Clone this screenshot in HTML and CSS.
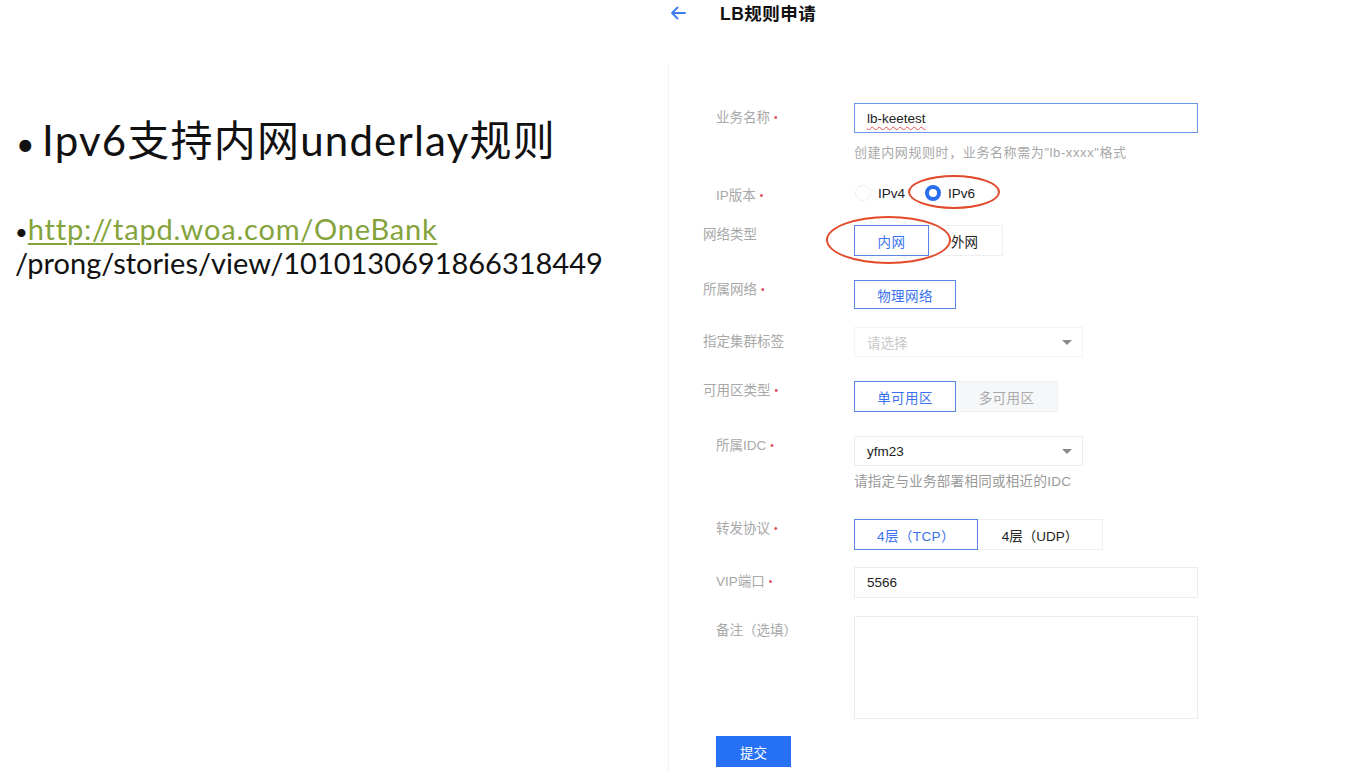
FILE: index.html
```html
<!DOCTYPE html>
<html lang="zh">
<head>
<meta charset="utf-8">
<title>LB规则申请</title>
<link rel="stylesheet" href="styles.css">
</head>
<body>
<div class="page">
  <section class="slide">
    <h1 class="slide-title"><span class="bullet">•</span>Ipv6支持内网underlay规则</h1>
    <div class="slide-link">
      <div class="link-line"><span class="dot">•</span><a href="#">http://tapd.woa.com/OneBank</a></div>
      <div class="link-line">/prong/stories/view/1010130691866318449</div>
    </div>
  </section>

  <section class="panel">
    <header class="panel-head">
      <svg class="back" width="18" height="16" viewBox="0 0 18 16"><path d="M16 8H3M8.5 2.5L3 8l5.5 5.5" fill="none" stroke="#3b7cf0" stroke-width="1.8" stroke-linecap="round" stroke-linejoin="round"/></svg>
      <h2 class="panel-title">LB规则申请</h2>
    </header>

    <div class="panel-body">
      <div class="row row-name">
        <div class="label">业务名称<i class="req">•</i></div>
        <div class="control">
          <div class="input input--active"><span class="typed">lb-keetest</span></div>
          <div class="hint">创建内网规则时，业务名称需为"lb-xxxx"格式</div>
        </div>
      </div>

      <div class="row row-ip">
        <div class="label">IP版本<i class="req">•</i></div>
        <div class="control radios">
          <span class="radio"><span class="circle"></span>IPv4</span>
          <span class="radio radio--on"><span class="circle"></span>IPv6</span>
          <span class="ring ring-ip"></span>
        </div>
      </div>

      <div class="row row-net">
        <div class="label label--shift label--top">网络类型</div>
        <div class="control">
          <div class="seg">
            <span class="seg-btn seg-btn--on w75">内网</span>
            <span class="seg-btn seg-btn--plain w74">外网</span>
          </div>
          <span class="ring ring-net"></span>
        </div>
      </div>

      <div class="row row-vpc">
        <div class="label label--shift label--top">所属网络<i class="req">•</i></div>
        <div class="control">
          <div class="seg">
            <span class="seg-btn seg-btn--on w102 h29">物理网络</span>
          </div>
        </div>
      </div>

      <div class="row row-cluster">
        <div class="label label--shift">指定集群标签</div>
        <div class="control">
          <div class="select select--faint"><span class="placeholder">请选择</span><span class="caret"></span></div>
        </div>
      </div>

      <div class="row row-zone">
        <div class="label label--shift label--top">可用区类型<i class="req">•</i></div>
        <div class="control">
          <div class="seg">
            <span class="seg-btn seg-btn--on w102">单可用区</span>
            <span class="seg-btn seg-btn--off w102">多可用区</span>
          </div>
        </div>
      </div>

      <div class="row row-idc">
        <div class="label label--top">所属IDC<i class="req">•</i></div>
        <div class="control">
          <div class="select"><span class="value">yfm23</span><span class="caret"></span></div>
          <div class="hint hint--idc">请指定与业务部署相同或相近的IDC</div>
        </div>
      </div>

      <div class="row row-proto">
        <div class="label label--top">转发协议<i class="req">•</i></div>
        <div class="control">
          <div class="seg">
            <span class="seg-btn seg-btn--on w124">4层（TCP）</span>
            <span class="seg-btn seg-btn--plain w125">4层（UDP）</span>
          </div>
        </div>
      </div>

      <div class="row row-vip">
        <div class="label">VIP端口<i class="req">•</i></div>
        <div class="control">
          <div class="input"><span class="value">5566</span></div>
        </div>
      </div>

      <div class="row row-remark">
        <div class="label">备注（选填）</div>
        <div class="control">
          <div class="textarea"></div>
        </div>
      </div>

      <div class="row row-submit">
        <button class="submit" type="button">提交</button>
      </div>
    </div>
  </section>
</div>
</body>
</html>
```

FILE: styles.css
```css
* { box-sizing: border-box; }
html, body { margin: 0; padding: 0; background: #fff; }
body {
  width: 1364px;
  height: 772px;
  overflow: hidden;
  font-family: "Liberation Sans", "Noto Sans CJK SC", sans-serif;
}
.page {
  display: flex;
  height: 772px;
}

/* ---------- left slide ---------- */
.slide {
  width: 668px;
  flex: none;
  padding-top: 112px;
  font-family: "Lato", "Noto Sans CJK SC", sans-serif;
  color: #111;
}
.slide-title {
  margin: 0 0 0 16px;
  font-weight: 400;
  font-size: 42px;
  line-height: 56px;
  letter-spacing: 1.2px;
  white-space: nowrap;
}
.slide-title .bullet {
  display: inline-block;
  width: 26px;
  font-size: 32px;
  letter-spacing: 0;
}
.slide-link {
  margin: 40px 0 0 15px;
  font-size: 29px;
  white-space: nowrap;
}
.link-line {
  height: 34px;
  line-height: 34px;
}
.slide-link .dot { font-size: 22px; }
.slide-link a {
  color: #84a33b;
  letter-spacing: 0.8px;
  text-decoration: underline;
  text-decoration-thickness: 2px;
  text-underline-offset: 3px;
}

/* ---------- right panel ---------- */
.panel {
  flex: 1;
  display: flex;
  flex-direction: column;
}
.panel-head {
  display: flex;
  align-items: center;
  height: 28px;
  padding-left: 1px;
}
.back { display: block; margin-top: -3px; }
.panel-title {
  margin: -3px 0 0 33px;
  font-size: 17.5px;
  font-weight: 700;
  color: #111;
  letter-spacing: 0.5px;
}
.panel-body {
  flex: 1;
  margin-top: 37px;
  border-left: 1px solid #f1f1f4;
  padding: 38px 0 0 47px;
}

.row {
  display: flex;
  align-items: flex-start;
}
.row-ip { margin-top: 21px; }
.row-net { margin-top: 19px; }
.row-vpc { margin-top: 24px; }
.row-cluster { margin-top: 18px; }
.row-zone { margin-top: 24px; }
.row-idc { margin-top: 24px; }
.row-proto { margin-top: 30px; }
.row-vip { margin-top: 17px; }
.row-remark { margin-top: 18px; }
.row-submit { margin-top: 17px; }

.label {
  width: 138px;
  flex: none;
  font-size: 13.5px;
  line-height: 20px;
  padding-top: 5px;
  color: #a8a8a8;
  white-space: nowrap;
}
.label--shift { margin-left: -13px; width: 151px; }
.label--top { padding-top: 0; }
.req {
  font-style: normal;
  color: #e0445a;
  font-size: 10px;
  margin-left: 4px;
  vertical-align: 1px;
}

.control {
  position: relative;
  font-size: 13.5px;
  color: #222;
}

.input {
  width: 344px;
  height: 31px;
  border: 1px solid #ececef;
  display: flex;
  align-items: center;
  padding-left: 12px;
}
.input--active {
  height: 30px;
  border-color: #6b93e8;
  border-width: 1.5px;
}
.typed {
  text-decoration: underline wavy #e05050;
  text-decoration-thickness: 1px;
  text-underline-offset: 3px;
}
.value { color: #222; }

.hint {
  margin-top: 12px;
  font-size: 13px;
  line-height: 15px;
  letter-spacing: 0.6px;
  color: #a8a8a8;
  white-space: nowrap;
}
.hint--idc { margin-top: 8px; font-size: 13.5px; letter-spacing: 0.3px; color: #9a9a9a; }

/* radios */
.radios {
  display: flex;
  align-items: center;
  height: 24px;
  padding-left: 1px;
}
.radio {
  display: flex;
  align-items: center;
  color: #222;
}
.radio + .radio { margin-left: 20px; }
.circle {
  width: 16px;
  height: 16px;
  border-radius: 50%;
  border: 1px solid #efefef;
  margin-right: 7px;
  background: #fff;
}
.radio--on .circle {
  border: 4px solid #2a6ef0;
}

/* segmented */
.seg { display: flex; }
.seg-btn {
  height: 31px;
  display: flex;
  align-items: center;
  justify-content: center;
  border: 1px solid #efeff2;
  color: #222;
  background: #fff;
  white-space: nowrap;
}
.seg-btn + .seg-btn { border-left: none; }
.seg-btn--on {
  border: 1px solid #5a86e6;
  color: #3a72ee;
  letter-spacing: 0.4px;
}
.seg-btn--off {
  background: #f6f7f9;
  color: #a9a9a9;
  letter-spacing: 0.4px;
}
.w75 { width: 75px; }
.w74 { width: 74px; justify-content: flex-start; padding-left: 22px; }
.w102 { width: 102px; }
.w124 { width: 124px; }
.w125 { width: 125px; }
.h29 { height: 29px; }

/* select */
.select {
  width: 229px;
  height: 30px;
  border: 1px solid #ececef;
  display: flex;
  align-items: center;
  justify-content: space-between;
  padding: 0 10px 0 12px;
}
.select--faint { border-color: #f3f3f5; }
.placeholder { color: #c8c8c8; }
.caret {
  width: 0;
  height: 0;
  border-left: 5px solid transparent;
  border-right: 5px solid transparent;
  border-top: 5px solid #8a8a8a;
}

.textarea {
  width: 344px;
  height: 103px;
  border: 1px solid #ececef;
}

.submit {
  width: 75px;
  height: 31px;
  border: none;
  background: #2771f6;
  color: #fff;
  font-family: "Noto Sans CJK SC", sans-serif;
  font-size: 13.5px;
  padding: 0;
  cursor: pointer;
}

/* annotation ellipses */
.ring {
  position: absolute;
  border: 2px solid #e24a2b;
  border-radius: 50%;
  pointer-events: none;
}
.ring-ip {
  left: 54px;
  top: -6px;
  width: 92px;
  height: 34px;
}
.ring-net {
  left: -28px;
  top: -9px;
  width: 125px;
  height: 48px;
}
```
